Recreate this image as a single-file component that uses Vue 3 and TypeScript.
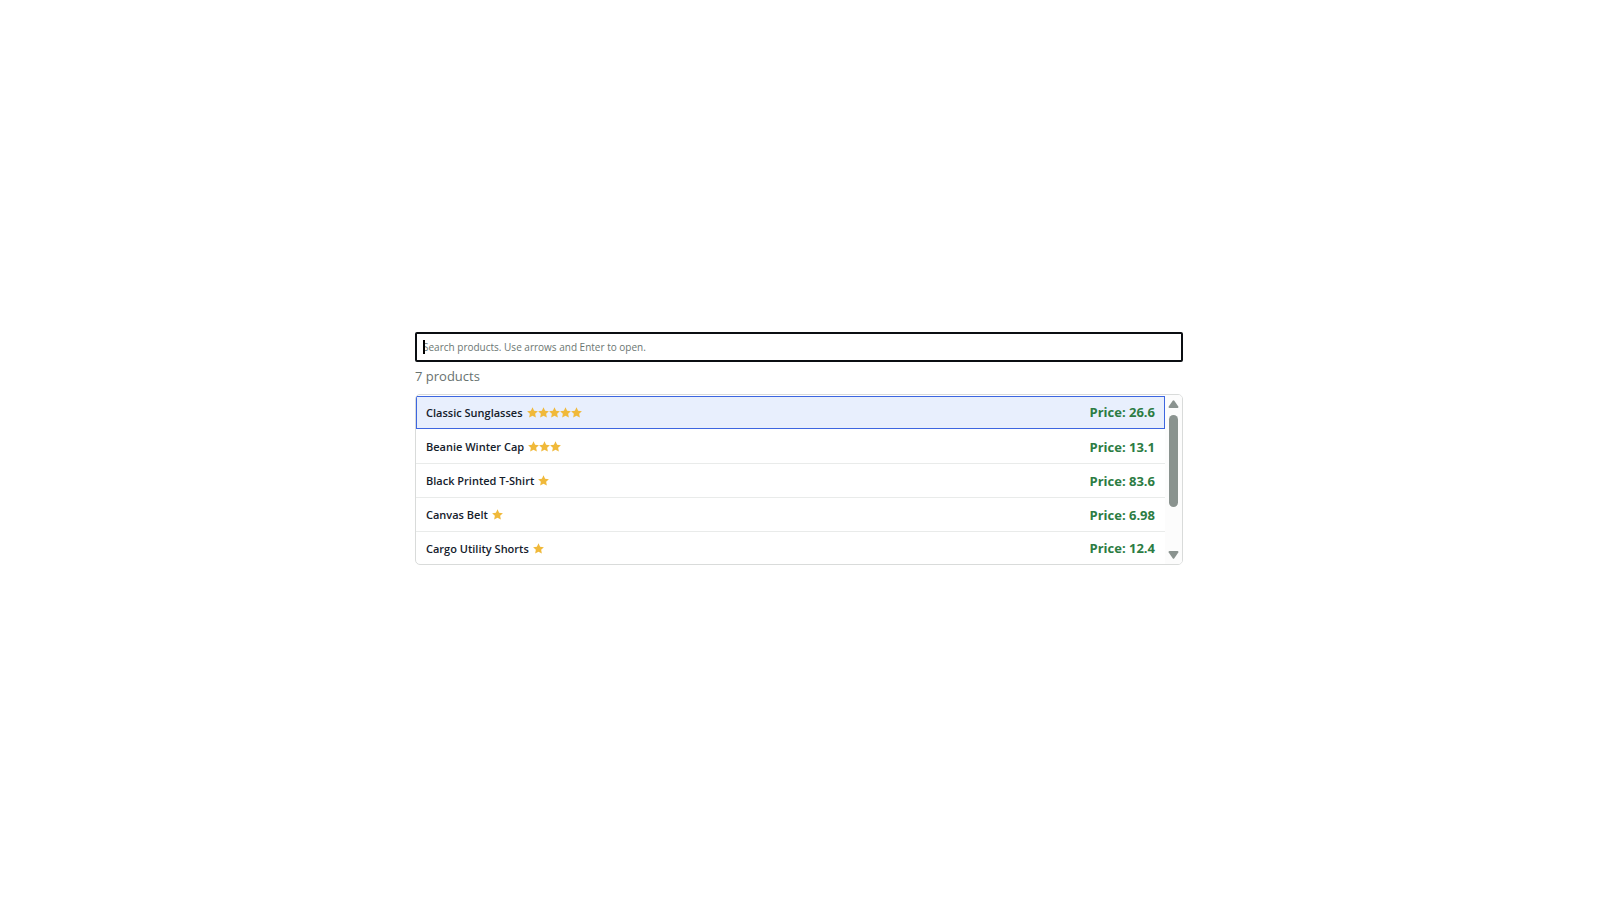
<script setup lang="ts">
import { computed, ref } from 'vue'

interface Product {
  name: string
  rating: number
  price: string
}

const products: Product[] = [
  { name: 'Classic Sunglasses', rating: 5, price: '26.6' },
  { name: 'Beanie Winter Cap', rating: 3, price: '13.1' },
  { name: 'Black Printed T-Shirt', rating: 1, price: '83.6' },
  { name: 'Canvas Belt', rating: 1, price: '6.98' },
  { name: 'Cargo Utility Shorts', rating: 1, price: '12.4' },
]

const total = 7
const query = ref('')
const active = ref(0)

const visible = computed(() =>
  products.filter((p) => p.name.toLowerCase().includes(query.value.trim().toLowerCase())),
)
const count = computed(() => (query.value.trim() ? visible.value.length : total))

function move(step: number) {
  const last = Math.max(visible.value.length - 1, 0)
  active.value = Math.min(Math.max(active.value + step, 0), last)
}
</script>

<template>
  <main class="page">
    <section class="picker">
      <div class="search">
        <input
          v-model="query"
          class="field"
          type="text"
          aria-label="Search products"
          aria-controls="product-list"
          placeholder="Search products. Use arrows and Enter to open."
          @input="active = 0"
          @keydown.down.prevent="move(1)"
          @keydown.up.prevent="move(-1)"
        />
        <span v-if="!query" class="caret" aria-hidden="true"></span>
      </div>
      <p class="count">{{ count }} products</p>
      <div class="panel">
        <ul id="product-list" class="list" role="listbox" aria-label="Products">
          <li
            v-for="(product, index) in visible"
            :key="product.name"
            class="row"
            :class="{ active: index === active }"
            role="option"
            :aria-selected="index === active"
            @click="active = index"
          >
            <span class="name">{{ product.name }}</span>
            <span class="stars" role="img" :aria-label="`${product.rating} of 5 stars`">
              <svg v-for="n in product.rating" :key="n" class="star" viewBox="0 0 20 20">
                <path d="M10 0.4 12.9 6.7 19.8 7.5 14.8 12.2 16.1 19.2 10 15.8 3.9 19.2 5.2 12.2 0.2 7.5 7.1 6.7Z" />
              </svg>
            </span>
            <span class="price">Price: {{ product.price }}</span>
          </li>
        </ul>
        <div class="scrollbar">
          <button class="arrow" type="button" aria-label="Scroll up" @click="move(-1)">
            <svg viewBox="0 0 10 8"><path d="M4.2 0.7Q5 -0.3 5.8 0.7L9.8 6.6Q10.2 8 9 8H1Q-0.2 8 0.2 6.6Z" /></svg>
          </button>
          <div class="track"><div class="thumb"></div></div>
          <button class="arrow" type="button" aria-label="Scroll down" @click="move(1)">
            <svg viewBox="0 0 10 8"><path d="M4.2 7.3Q5 8.3 5.8 7.3L9.8 1.4Q10.2 0 9 0H1Q-0.2 0 0.2 1.4Z" /></svg>
          </button>
        </div>
      </div>
    </section>
  </main>
</template>

<style>
body {
  margin: 0;
  background: #fff;
}
</style>

<style scoped>
.page {
  box-sizing: border-box;
  display: flex;
  align-items: center;
  justify-content: center;
  min-height: 100vh;
  padding: 0 18px 3px 16px;
  font-family: 'Open Sans', 'Noto Sans', sans-serif;
  color: #14202b;
}
.picker {
  width: 100%;
  max-width: 768px;
}
.search {
  position: relative;
}
.field {
  box-sizing: border-box;
  display: block;
  width: 100%;
  height: 30px;
  padding: 0 6px;
  border: 2px solid #0b0e12;
  border-radius: 2px;
  outline: none;
  background: #fff;
  color: #14202b;
  font-family: inherit;
  font-size: 10px;
}
.field::placeholder {
  color: #6b7672;
  opacity: 1;
}
.caret {
  position: absolute;
  top: 8px;
  left: 8px;
  width: 2px;
  height: 14px;
  background: #000;
}
.count {
  margin: 4px 0 8px;
  font-size: 13px;
  line-height: 20px;
  color: #68726f;
}
.panel {
  display: flex;
  overflow: hidden;
  border: 1px solid #d9dbda;
  border-radius: 5px;
}
.list {
  flex: 1;
  min-width: 0;
  margin: 0;
  padding: 0;
  list-style: none;
}
.row {
  box-sizing: border-box;
  display: flex;
  align-items: center;
  height: 34px;
  padding: 0 10px;
  border-bottom: 1px solid #e9ebea;
}
.row:last-child {
  height: 32px;
  border-bottom: 0;
}
.row.active {
  margin: 1px 0;
  height: 33px;
  padding: 0 9px 1px;
  border: 1px solid #3d66e0;
  background: #e8effd;
}
.name {
  font-size: 11px;
  font-weight: 600;
}
.stars {
  display: flex;
  margin-left: 4px;
}
.star {
  width: 11px;
  height: 11px;
  fill: #f0b93a;
}
.price {
  margin-left: auto;
  font-size: 13px;
  font-weight: 700;
  color: #2c7c43;
}
.scrollbar {
  display: flex;
  flex-direction: column;
  width: 17px;
  background: #fcfcfc;
}
.arrow {
  display: flex;
  align-items: center;
  justify-content: center;
  height: 18px;
  padding: 0;
  border: 0;
  background: none;
}
.arrow svg {
  width: 11px;
  height: 8px;
  fill: #8a938f;
}
.track {
  flex: 1;
  padding: 2px 4px 0;
}
.thumb {
  height: 92px;
  border-radius: 5px;
  background: #8a938f;
}
</style>
